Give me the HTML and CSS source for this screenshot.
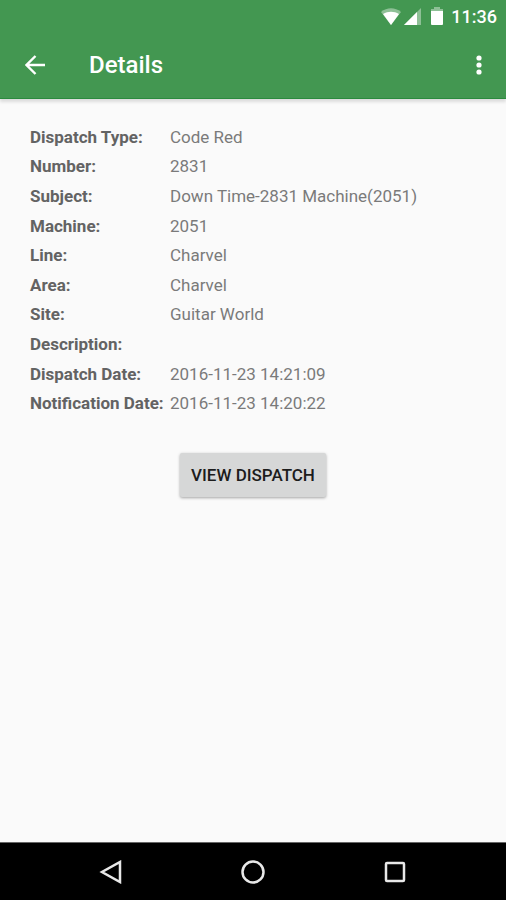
FILE: index.html
```html
<!DOCTYPE html>
<html lang="en">
<head>
  <meta charset="UTF-8">
  <meta name="viewport" content="width=device-width, initial-scale=1.0">
  <title>Details</title>
  <link rel="stylesheet" href="styles.css">
</head>
<body>

  <!-- Status bar -->
  <div class="status">
    <svg class="wifi" width="20" height="17" viewBox="0 0 20 17" aria-hidden="true">
      <path d="M0 4C6-1 14-1 20 4L10 17Z" fill="#fff" opacity=".4"/>
      <path d="M2 6C7 3 13 3 18 6L10 17Z" fill="#fff"/>
    </svg>
    <svg class="signal" width="17" height="17" viewBox="0 0 17 17" aria-hidden="true">
      <path d="M0 17L17 0V17Z" fill="#fff" opacity=".4"/>
      <path d="M0 17L13 4V17Z" fill="#fff"/>
    </svg>
    <svg class="battery" width="12" height="18" viewBox="0 0 12 18" aria-hidden="true">
      <path d="M0 2H3V0H9V2H12V4H0Z" fill="#fff" opacity=".4"/>
      <path d="M0 4H12V17Q12 18 11 18H1Q0 18 0 17Z" fill="#fff"/>
    </svg>
    <span class="clock">11:36</span>
  </div>

  <header class="appbar">
    <button class="icon-btn" type="button" aria-label="Back">
      <svg width="20" height="20" viewBox="0 0 20 20">
        <path d="M20 10H2M10.500 1L1.500 10L10.500 19" fill="none" stroke="#fff" stroke-width="2.400"/>
      </svg>
    </button>
    <h1>Details</h1>
    <button class="icon-btn" type="button" aria-label="More options">
      <svg width="6" height="20" viewBox="0 0 6 20" fill="#fff">
        <circle cx="3" cy="3" r="2.600"/>
        <circle cx="3" cy="10" r="2.600"/>
        <circle cx="3" cy="17" r="2.600"/>
      </svg>
    </button>
  </header>

  <main>
    <table class="details">
      <tr><th scope="row">Dispatch Type:</th><td>Code Red</td></tr>
      <tr><th scope="row">Number:</th><td>2831</td></tr>
      <tr><th scope="row">Subject:</th><td>Down Time-2831 Machine(2051)</td></tr>
      <tr><th scope="row">Machine:</th><td>2051</td></tr>
      <tr><th scope="row">Line:</th><td>Charvel</td></tr>
      <tr><th scope="row">Area:</th><td>Charvel</td></tr>
      <tr><th scope="row">Site:</th><td>Guitar World</td></tr>
      <tr><th scope="row">Description:</th><td></td></tr>
      <tr><th scope="row">Dispatch Date:</th><td>2016-11-23 14:21:09</td></tr>
      <tr><th scope="row">Notification Date:</th><td>2016-11-23 14:20:22</td></tr>
    </table>
    <button class="view-btn" type="button">VIEW DISPATCH</button>
  </main>

  <!-- System navigation -->
  <nav class="navbar">
    <button type="button" aria-label="Back">
      <svg width="24" height="24" viewBox="0 0 24 24">
        <path d="M21 2V22L3 12Z"/>
      </svg>
    </button>
    <button type="button" aria-label="Home">
      <svg width="24" height="24" viewBox="0 0 24 24">
        <circle cx="12" cy="12" r="10.500"/>
      </svg>
    </button>
    <button type="button" aria-label="Recent apps">
      <svg width="24" height="24" viewBox="0 0 24 24">
        <rect x="3" y="3" width="18" height="18" rx="1"/>
      </svg>
    </button>
  </nav>

</body>
</html>
```
FILE: styles.css
```css
* { box-sizing: border-box; }
body { font-family: Roboto, sans-serif; background: #fafafa; margin: 0; min-height: 100vh; display: flex; flex-direction: column; color: #7a7a7a; }
button { font-family: inherit; border: none; cursor: pointer; }

.status { background: #439751; color: white; height: 32px; padding: 0 9px; display: flex; justify-content: flex-end; align-items: center; }
.wifi { margin-right: 3px; }
.signal { margin-right: 10px; }
.battery { margin-right: 8px; }
.clock { font-size: 18px; font-weight: 500; }

.appbar { background: #439751; color: white; height: 67px; padding: 0 12px; display: flex; align-items: center; border-bottom: 1px solid #2b8a3e; box-shadow: 0 3px 3px rgba(0, 0, 0, 0.12); }
.appbar h1 { flex: 1; margin: 0 0 0 31px; font-size: 24px; font-weight: 500; }
.icon-btn { background: none; padding: 0; width: 46px; height: 46px; display: flex; align-items: center; justify-content: center; }
.icon-btn:last-child { width: 30px; }

main { flex: 1; padding: 23px 30px; display: flex; flex-direction: column; }
.details { width: 100%; height: 296px; border-collapse: collapse; font-size: 17px; line-height: 24px; text-align: left; }
.details th { width: 140px; padding: 0; font-weight: 700; color: #636363; white-space: nowrap; }
.details td { padding: 0; }

.view-btn { align-self: center; margin-top: 35px; padding: 0 11px; height: 44px; background: #d6d7d7; color: #1c1c1c; font-size: 17px; font-weight: 500; border-radius: 2px; box-shadow: 0 1px 3px rgba(0, 0, 0, 0.35); }
.view-btn:hover { background: #c8c9c9; }

.navbar { background: #000; height: 58px; padding: 0 8%; border-top: 1px solid #666; display: grid; grid-template-columns: repeat(3, 1fr); }
.navbar button { background: none; padding: 0; display: flex; align-items: center; justify-content: center; }
.navbar svg { fill: none; stroke: #e8e8e8; stroke-width: 2.5; }
```
